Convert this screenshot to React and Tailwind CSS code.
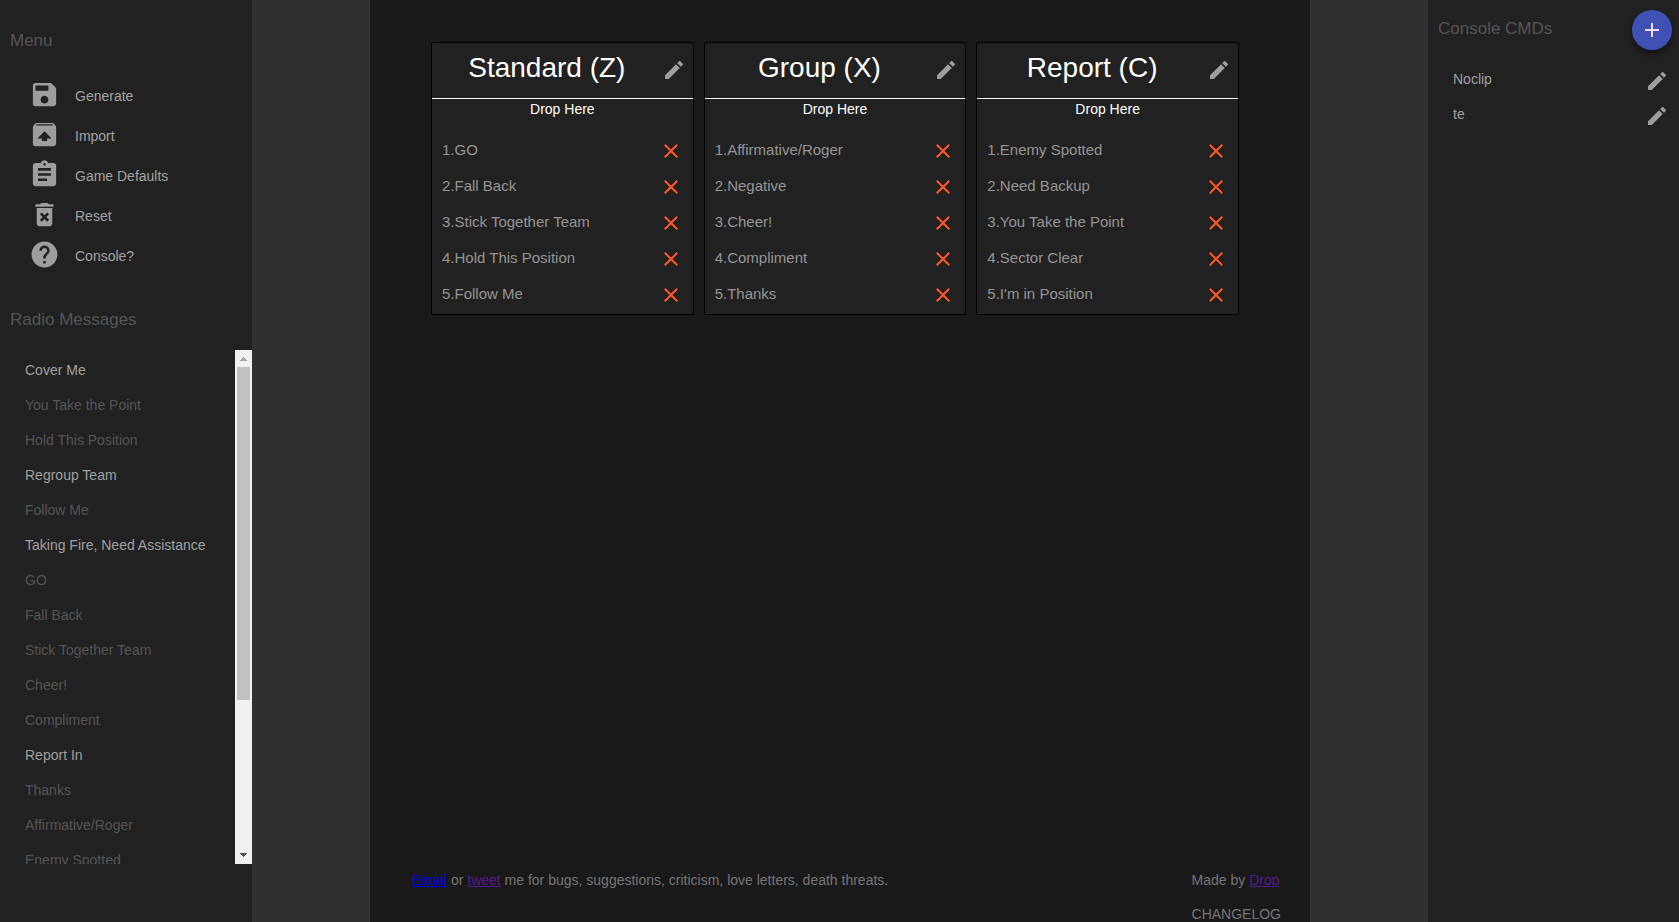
import React from "react";
import {
  MdAdd,
  MdAssignment,
  MdClear,
  MdDeleteForever,
  MdEdit,
  MdHelp,
  MdSave,
  MdUnarchive,
} from "react-icons/md";

const menuItems = [
  { label: "Generate", Icon: MdSave },
  { label: "Import", Icon: MdUnarchive },
  { label: "Game Defaults", Icon: MdAssignment },
  { label: "Reset", Icon: MdDeleteForever },
  { label: "Console?", Icon: MdHelp },
];

const radioMessages = [
  { label: "Cover Me", used: false },
  { label: "You Take the Point", used: true },
  { label: "Hold This Position", used: true },
  { label: "Regroup Team", used: false },
  { label: "Follow Me", used: true },
  { label: "Taking Fire, Need Assistance", used: false },
  { label: "GO", used: true },
  { label: "Fall Back", used: true },
  { label: "Stick Together Team", used: true },
  { label: "Cheer!", used: true },
  { label: "Compliment", used: true },
  { label: "Report In", used: false },
  { label: "Thanks", used: true },
  { label: "Affirmative/Roger", used: true },
  { label: "Enemy Spotted", used: true },
];

const groups = [
  {
    title: "Standard (Z)",
    items: ["GO", "Fall Back", "Stick Together Team", "Hold This Position", "Follow Me"],
  },
  {
    title: "Group (X)",
    items: ["Affirmative/Roger", "Negative", "Cheer!", "Compliment", "Thanks"],
  },
  {
    title: "Report (C)",
    items: ["Enemy Spotted", "Need Backup", "You Take the Point", "Sector Clear", "I'm in Position"],
  },
];

const commands = ["Noclip", "te"];

function PanelHeading({ children }) {
  return <h2 className="text-[17px] leading-6 text-[#555555]">{children}</h2>;
}

function ScrollBar() {
  return (
    <div aria-hidden="true" className="flex w-[17px] shrink-0 flex-col bg-[#f1f1f1]">
      <div className="flex h-[17px] items-center justify-center">
        <svg className="h-1 w-[7px]" viewBox="0 0 7 4" shapeRendering="crispEdges">
          <path d="M3 0h1v1h1v1h1v1h1v1H0V3h1V2h1V1h1z" fill="#a3a3a3" />
        </svg>
      </div>
      <div className="flex-1 px-[2px]">
        <div className="h-[333px] bg-[#c1c1c1]" />
      </div>
      <div className="flex h-[17px] items-start justify-center pt-[6px]">
        <svg className="h-1 w-[7px]" viewBox="0 0 7 4" shapeRendering="crispEdges">
          <path d="M0 0h7v1H6v1H5v1H4v1H3V3H2V2H1V1H0z" fill="#505050" />
        </svg>
      </div>
    </div>
  );
}

function MenuPanel() {
  return (
    <aside className="flex w-[252px] shrink-0 flex-col bg-[#212121] pt-[29px] pb-[58px]">
      <div className="pl-[10px]">
        <PanelHeading>Menu</PanelHeading>
      </div>
      <nav className="mt-[23px] pl-[29px]">
        <ul>
          {menuItems.map(({ label, Icon }) => (
            <li key={label}>
              <button type="button" className="flex h-10 items-start text-left">
                <Icon className="mt-[3px] size-[31px] text-[#9e9e9e]" />
                <span className="pt-2 pl-[15px] text-sm leading-6 text-[#a3a3a3]">{label}</span>
              </button>
            </li>
          ))}
        </ul>
      </nav>
      <div className="mt-8 pl-[10px]">
        <PanelHeading>Radio Messages</PanelHeading>
      </div>
      <div className="mt-[18px] flex min-h-0 flex-1">
        <ul className="flex-1 overflow-y-auto pt-[3px] pl-[25px] [scrollbar-width:none]">
          {radioMessages.map(({ label, used }) => (
            <li
              key={label}
              className={
                used
                  ? "h-[35px] text-sm leading-[35px] whitespace-nowrap text-[#555555]"
                  : "h-[35px] text-sm leading-[35px] whitespace-nowrap text-[#a0a0a0]"
              }
            >
              {label}
            </li>
          ))}
        </ul>
        <ScrollBar />
      </div>
    </aside>
  );
}

function GroupCard({ title, items }) {
  return (
    <section className="rounded-[2px] border border-black bg-[#212121] pb-[2px]">
      <header className="flex h-[56px] items-start border-b border-white pt-[9px] pr-[7px]">
        <h1 className="flex-1 text-center text-[28px] leading-8 text-white">{title}</h1>
        <button type="button" aria-label={`Edit ${title}`} className="mt-[6px] text-[#9e9e9e]">
          <MdEdit className="size-6" />
        </button>
      </header>
      <p className="text-center text-sm leading-5 text-white">Drop Here</p>
      <ol className="mt-[13px]">
        {items.map((item, index) => (
          <li key={item} className="flex h-9 items-center justify-between pr-[10px] pl-[10px]">
            <span className="text-[15px] leading-5 text-[#959595]">
              {index + 1}.{item}
            </span>
            <button type="button" aria-label={`Remove ${item}`} className="pt-[2px] text-[#ff5722]">
              <MdClear className="size-6" />
            </button>
          </li>
        ))}
      </ol>
    </section>
  );
}

function Footer() {
  return (
    <footer className="flex items-start justify-between pr-[29px] pl-[42px] text-sm leading-4 text-[#757575]">
      <p>
        <a href="#email" className="text-[#0000ee] underline">Email</a> or{" "}
        <a href="#tweet" className="text-[#551a8b] underline">tweet</a> me for bugs, suggestions,
        criticism, love letters, death threats.
      </p>
      <div className="flex flex-col gap-[18px]">
        <p>
          Made by <a href="#drop" className="text-[#551a8b] underline">Drop</a>
        </p>
        <button type="button" className="text-left">CHANGELOG</button>
      </div>
    </footer>
  );
}

function CommandPanel() {
  return (
    <aside className="w-[251px] shrink-0 bg-[#212121] pt-[10px]">
      <div className="flex items-start justify-between pr-[7px] pl-[10px]">
        <div className="pt-[7px]">
          <PanelHeading>Console CMDs</PanelHeading>
        </div>
        <button
          type="button"
          aria-label="Add command"
          className="flex size-10 items-center justify-center rounded-full bg-[#3f51b5] text-[#eeddff] shadow-md shadow-black/40"
        >
          <MdAdd className="size-6" />
        </button>
      </div>
      <ul className="mt-[11px]">
        {commands.map((name) => (
          <li key={name} className="flex h-[35px] items-center justify-between pr-[10px] pl-[25px]">
            <span className="text-sm leading-5 text-[#a0a0a0]">{name}</span>
            <button type="button" aria-label={`Edit ${name}`} className="pt-1 text-[#9e9e9e]">
              <MdEdit className="size-6" />
            </button>
          </li>
        ))}
      </ul>
    </aside>
  );
}

export default function App() {
  return (
    <div className="flex h-screen bg-[#303030] font-['Liberation_Sans',Arial,sans-serif]">
      <MenuPanel />
      <main className="mx-[118px] flex flex-1 flex-col justify-between bg-[#191919] pt-[42px]">
        <div className="grid grid-cols-3 gap-[10px] pr-[71px] pl-[61px]">
          {groups.map((group) => (
            <GroupCard key={group.title} {...group} />
          ))}
        </div>
        <Footer />
      </main>
      <CommandPanel />
    </div>
  );
}
